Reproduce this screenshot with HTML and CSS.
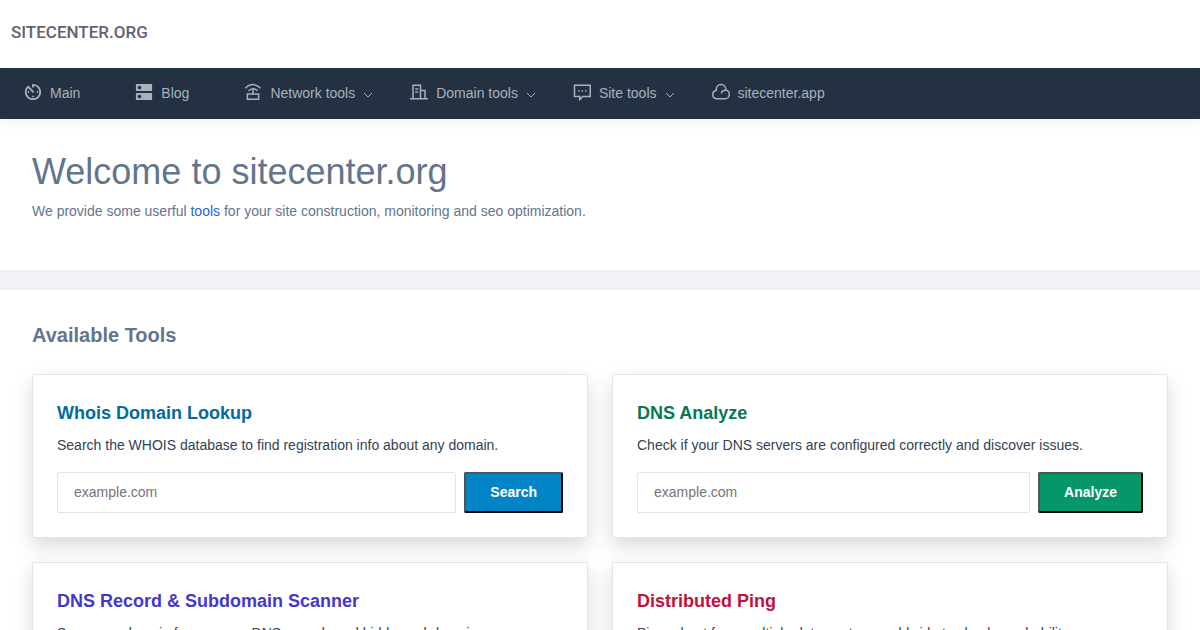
FILE: index.html
```html
<!DOCTYPE html>
<html lang="en">
<head>
    <meta charset="UTF-8">
    <meta name="viewport" content="width=device-width, initial-scale=1.0">
    <title>Sitecenter.org</title>
    <link rel="stylesheet" href="styles.css">
</head>
<body>
    <header class="header">
        <a class="logo" href="/">SITECENTER.ORG</a>
    </header>
    <nav class="nav">
        <a class="nav-item" href="/">
            <svg class="icon" viewBox="2 2 20 20"><path d="M11 17c0 .55.45 1 1 1s1-.45 1-1-.45-1-1-1-1 .45-1 1zm0-14v4h2V5.080c3.390.490 6 3.390 6 6.920 0 3.870-3.130 7-7 7s-7-3.130-7-7c0-1.680.590-3.220 1.580-4.420L12 13l1.410-1.410-6.800-6.800v.020C4.420 6.450 3 9.050 3 12c0 4.970 4.020 9 9 9 4.970 0 9-4.030 9-9s-4.030-9-9-9h-1zm7 9c0-.55-.45-1-1-1s-1 .45-1 1 .45 1 1 1 1-.45 1-1zM6 12c0 .55.45 1 1 1s1-.45 1-1-.45-1-1-1-1 .45-1 1z"/></svg>
            <span>Main</span>
        </a>
        <a class="nav-item" href="/blog">
            <svg class="icon" viewBox="2 2 20 20"><path d="M20 13H4c-.55 0-1 .45-1 1v6c0 .55.45 1 1 1h16c.55 0 1-.45 1-1v-6c0-.55-.45-1-1-1zM7 19c-1.100 0-2-.9-2-2s.9-2 2-2 2 .9 2 2-.9 2-2 2zM20 3H4c-.55 0-1 .45-1 1v6c0 .55.45 1 1 1h16c.55 0 1-.45 1-1V4c0-.55-.45-1-1-1zM7 9c-1.100 0-2-.9-2-2s.9-2 2-2 2 .9 2 2-.9 2-2 2z"/></svg>
            <span>Blog</span>
        </a>
        <button class="nav-item nav-drop" type="button">
            <svg class="icon line" viewBox="0 0 24 24"><path d="M4.500 14.500h15v7h-15zM12 14.500V8.500M2 7c5.500-6.500 14.500-6.500 20 0M6 10.500c3.500-4 8.500-4 12 0"/></svg>
            <span>Network tools</span>
            <svg class="chevron" viewBox="0 0 10 6"><path d="M1 1l4 4 4-4"/></svg>
        </button>
        <button class="nav-item nav-drop" type="button">
            <svg class="icon line" viewBox="0 0 24 24"><path d="M0 21h24M4 21V3h10v18M14 10h6v11M7 8h4M7 12h4"/></svg>
            <span>Domain tools</span>
            <svg class="chevron" viewBox="0 0 10 6"><path d="M1 1l4 4 4-4"/></svg>
        </button>
        <button class="nav-item nav-drop" type="button">
            <svg class="icon line" viewBox="0 0 24 24"><path d="M2 3h21v15H13l-4 4v-4H2zM7 10.500h2M11.500 10.500h2M16 10.500h2"/></svg>
            <span>Site tools</span>
            <svg class="chevron" viewBox="0 0 10 6"><path d="M1 1l4 4 4-4"/></svg>
        </button>
        <a class="nav-item" href="https://sitecenter.app">
            <svg class="icon line" viewBox="0 0 24 24"><path d="M6.500 21a5.500 5.500 0 0 1-1-10.900C5.500 5.500 8 2 12 2s6.500 3.500 6.500 7.500c3 .5 4.500 2.800 4.500 5.700 0 3.300-2.500 5.800-5.500 5.800zM12.500 14c0-2.800 2.500-4.500 6-4.500"/></svg>
            <span>sitecenter.app</span>
        </a>
    </nav>

    <section class="intro">
        <h1>Welcome to sitecenter.org</h1>
        <p>We provide some userful <a href="#tools">tools</a> for your site construction, monitoring and seo optimization.</p>
    </section>

    <main class="tools" id="tools">
        <h2>Available Tools</h2>
        <div class="grid">
            <form class="card">
                <h3 class="blue">Whois Domain Lookup</h3>
                <p>Search the WHOIS database to find registration info about any domain.</p>
                <div class="row">
                    <input type="text" placeholder="example.com" aria-label="Domain for whois lookup">
                    <button class="bg-blue" type="submit">Search</button>
                </div>
            </form>
            <form class="card">
                <h3 class="green">DNS Analyze</h3>
                <p>Check if your DNS servers are configured correctly and discover issues.</p>
                <div class="row">
                    <input type="text" placeholder="example.com" aria-label="Domain for DNS analyze">
                    <button class="bg-green" type="submit">Analyze</button>
                </div>
            </form>
            <form class="card">
                <h3 class="indigo">DNS Record &amp; Subdomain Scanner</h3>
                <p>Scan your domain for common DNS records and hidden subdomains.</p>
                <div class="row">
                    <input type="text" placeholder="example.com" aria-label="Domain to scan">
                    <button class="bg-indigo" type="submit">Scan</button>
                </div>
            </form>
            <form class="card">
                <h3 class="red">Distributed Ping</h3>
                <p>Ping a host from multiple data centers worldwide to check reachability.</p>
                <div class="row">
                    <input type="text" placeholder="example.com" aria-label="Host to ping">
                    <button class="bg-red" type="submit">Ping</button>
                </div>
            </form>
        </div>
    </main>
</body>
</html>
```
FILE: styles.css
```css
* {
    box-sizing: border-box;
}
body {
    margin: 0;
    font-family: "Liberation Sans", Arial, sans-serif;
    font-size: 14px;
    line-height: 21px;
    color: #64748b;
    background: #fff;
}
h1, h2, h3, p {
    margin: 0;
}
a {
    color: #2563eb;
    text-decoration: none;
}
.header {
    padding: 20px 11px 24px;
}
.logo {
    display: block;
    font-family: Roboto, sans-serif;
    font-size: 17px;
    font-weight: 500;
    line-height: 24px;
    color: #64626f;
}
.nav {
    display: flex;
    flex-wrap: wrap;
    background: #233142;
    box-shadow: 0 4px 12px rgba(0, 0, 0, 0.05);
}
.nav-item {
    display: flex;
    align-items: center;
    gap: 8px;
    padding: 15px 30px 15px 24px;
    border: 0;
    border-right: 1px solid #212e3f;
    background: none;
    color: #a9b1bb;
    font: inherit;
    cursor: pointer;
}
.nav-drop {
    padding-right: 12px;
}
.nav-item:hover {
    color: #fff;
}
.icon {
    width: 18px;
    height: 18px;
    margin-bottom: 3px;
    fill: currentColor;
}
.line {
    fill: none;
    stroke: currentColor;
    stroke-width: 2;
}
.chevron {
    width: 10px;
    height: 6px;
    margin-top: 3px;
    fill: none;
    stroke: currentColor;
}
.intro {
    padding: 32px 32px 48px;
    border-bottom: 20px solid #f1f2f5;
}
.intro h1 {
    font-size: 36px;
    font-weight: 400;
    line-height: 42px;
    margin-bottom: 8px;
}
.tools {
    padding: 32px;
}
.tools h2 {
    font-size: 20px;
    line-height: 26px;
    margin-bottom: 26px;
}
.grid {
    display: grid;
    grid-template-columns: 1fr 1fr;
    gap: 24px;
}
.card {
    padding: 24px;
    border: 1px solid #e2e4e8;
    border-radius: 2px;
    background: #fff;
    box-shadow: 0 8px 20px rgba(0, 0, 0, 0.15);
}
.card h3 {
    font-size: 18px;
    line-height: 28px;
    margin-bottom: 8px;
}
.card p {
    color: #334155;
    margin-bottom: 16px;
}
.row {
    display: flex;
    gap: 8px;
}
.row input {
    flex: 1;
    min-width: 0;
    height: 41px;
    padding: 0 16px 1px;
    border: 1px solid #e2e4e8;
    border-radius: 2px;
    font: inherit;
}
.row input::placeholder {
    color: #757575;
}
.row button {
    padding: 0 24px;
    border: 2px outset #000;
    border-radius: 2px;
    color: #fff;
    font: inherit;
    font-weight: 700;
    cursor: pointer;
}
.blue {
    color: #0369a1;
}
.green {
    color: #047857;
}
.indigo {
    color: #4338ca;
}
.red {
    color: #be123c;
}
.bg-blue {
    background: #0284c7;
}
.bg-green {
    background: #059669;
}
.bg-indigo {
    background: #4f46e5;
}
.bg-red {
    background: #e11d48;
}
@media (max-width: 700px) {
    .grid {
        grid-template-columns: 1fr;
    }
}
```
